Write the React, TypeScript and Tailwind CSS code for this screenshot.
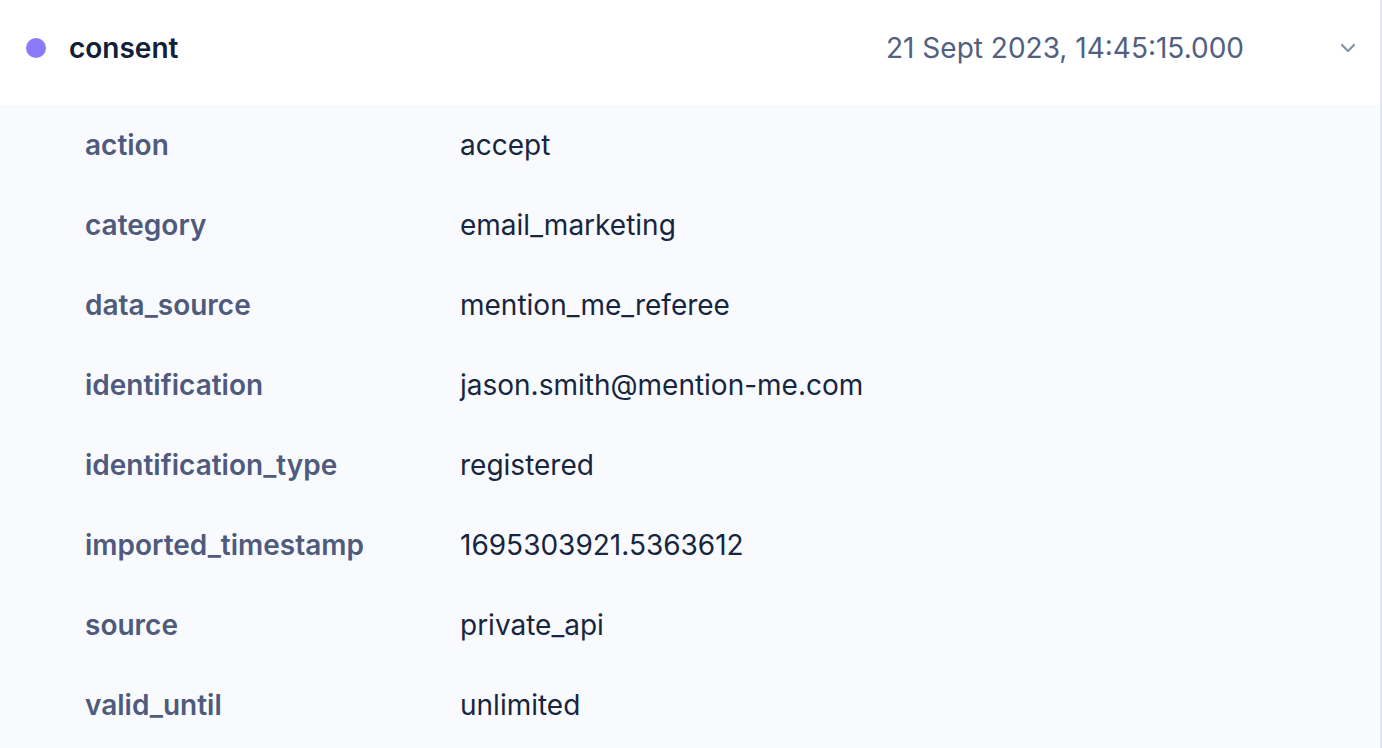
import React from "react";

const rows: [string, string][] = [
  ["action", "accept"],
  ["category", "email_marketing"],
  ["data_source", "mention_me_referee"],
  ["identification", "jason.smith@mention-me.com"],
  ["identification_type", "registered"],
  ["imported_timestamp", "1695303921.5363612"],
  ["source", "private_api"],
  ["valid_until", "unlimited"],
];

export default function App() {
  return (
    <div
      className="w-[1382px] h-[748px] overflow-hidden bg-white"
      style={{ fontFamily: "Inter, 'Noto Sans', sans-serif" }}
    >
      <div className="flex flex-col w-[1382px] border-r-2 border-[#e3e7f5] h-full">
        <div className="flex items-center h-[105px] bg-white pl-[26px] pr-[24px] pb-[10px]">
          <span className="w-5 h-5 rounded-full bg-[#8b78fa] shrink-0" />
          <span className="ml-[23px] text-[28px] font-semibold text-[#0f2038]">consent</span>
          <span className="ml-auto text-[28px] text-[#52607f]">21 Sept 2023, 14:45:15.000</span>
          <svg
            className="ml-[96px] w-[16px] h-[10px]"
            viewBox="0 0 16 10"
            fill="none"
            stroke="#8591ad"
            strokeWidth="2.2"
            strokeLinecap="round"
            strokeLinejoin="round"
          >
            <path d="M2 2l6 6 6-6" />
          </svg>
        </div>
        <div className="flex-1 bg-[#f9fafe]">
          {rows.map(([k, v]) => (
            <div key={k} className="flex items-center h-[80px] pl-[85px]">
              <span className="w-[375px] text-[28px] font-semibold text-[#4f5b7c]">{k}</span>
              <span className="text-[28px] text-[#16263e]">{v}</span>
            </div>
          ))}
        </div>
      </div>
    </div>
  );
}
